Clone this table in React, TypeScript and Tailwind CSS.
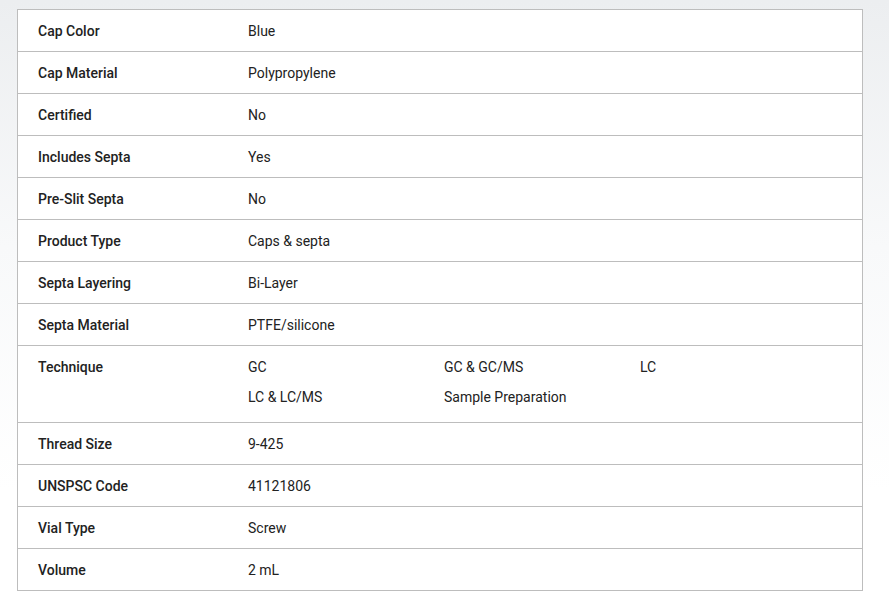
const rows: { label: string; value: string | string[] }[] = [
  { label: "Cap Color", value: "Blue" },
  { label: "Cap Material", value: "Polypropylene" },
  { label: "Certified", value: "No" },
  { label: "Includes Septa", value: "Yes" },
  { label: "Pre-Slit Septa", value: "No" },
  { label: "Product Type", value: "Caps & septa" },
  { label: "Septa Layering", value: "Bi-Layer" },
  { label: "Septa Material", value: "PTFE/silicone" },
  {
    label: "Technique",
    value: ["GC", "GC & GC/MS", "LC", "LC & LC/MS", "Sample Preparation"],
  },
  { label: "Thread Size", value: "9-425" },
  { label: "UNSPSC Code", value: "41121806" },
  { label: "Vial Type", value: "Screw" },
  { label: "Volume", value: "2 mL" },
];

export default function App() {
  return (
    <div className="min-h-[614px] w-full bg-gradient-to-b from-[#eceef0] via-[#f8f9fa] via-40% to-white to-80% pt-[9px] font-['Roboto',sans-serif] text-[14px] text-[#222]">
      <div className="ml-[17px] w-[846px] border border-[#bdbdbd] bg-white">
        {rows.map((row, i) => (
          <div
            key={row.label}
            className={`flex ${i > 0 ? "border-t border-[#bdbdbd]" : ""}`}
          >
            <div className="w-[230px] shrink-0 pt-[12px] pb-[10px] pl-[20px] font-medium leading-[19px]">
              {row.label}
            </div>
            {Array.isArray(row.value) ? (
              <div className="grid flex-1 grid-cols-[196px_196px_196px] gap-y-[11px] pt-[12px] pb-[15px] leading-[19px]">
                {row.value.map((v) => (
                  <div key={v}>{v}</div>
                ))}
              </div>
            ) : (
              <div className="flex-1 pt-[12px] pb-[10px] leading-[19px]">{row.value}</div>
            )}
          </div>
        ))}
      </div>
    </div>
  );
}
